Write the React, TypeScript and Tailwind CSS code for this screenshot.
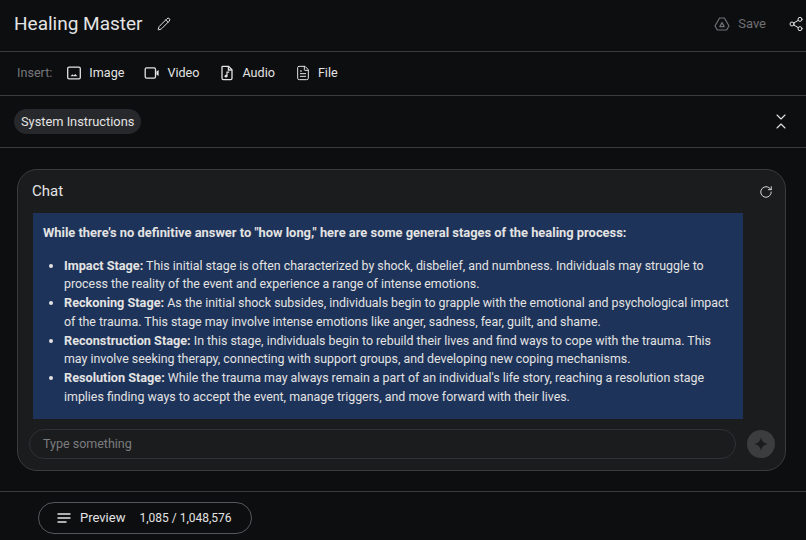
import React from "react";
import { ChevronDown, ChevronUp, FileText, Pencil, RotateCw, Share2 } from "lucide-react";

const stages = [
  {
    title: "Impact Stage:",
    text: " This initial stage is often characterized by shock, disbelief, and numbness. Individuals may struggle to process the reality of the event and experience a range of intense emotions.",
  },
  {
    title: "Reckoning Stage:",
    text: " As the initial shock subsides, individuals begin to grapple with the emotional and psychological impact of the trauma. This stage may involve intense emotions like anger, sadness, fear, guilt, and shame.",
  },
  {
    title: "Reconstruction Stage:",
    text: " In this stage, individuals begin to rebuild their lives and find ways to cope with the trauma. This may involve seeking therapy, connecting with support groups, and developing new coping mechanisms.",
  },
  {
    title: "Resolution Stage:",
    text: " While the trauma may always remain a part of an individual's life story, reaching a resolution stage implies finding ways to accept the event, manage triggers, and move forward with their lives.",
  },
];

function ImageIcon() {
  return (
    <svg width="16" height="16" viewBox="0 0 16 16" fill="none" stroke="currentColor" strokeWidth="1.3">
      <rect x="1.7" y="2.2" width="12.6" height="11.6" rx="1.4" />
      <path d="M4.5 11.2L6.3 9.2L7.7 10.6L9.2 9L11.5 11.2Z" fill="currentColor" stroke="none" />
    </svg>
  );
}

function VideoIcon() {
  return (
    <svg width="16" height="16" viewBox="0 0 16 16" fill="none" stroke="currentColor" strokeWidth="1.3">
      <rect x="1.2" y="2.8" width="10.3" height="10.4" rx="1.4" />
      <path d="M12.4 6.6L14.6 4.9V11.1L12.4 9.4Z" fill="currentColor" stroke="none" />
    </svg>
  );
}

function AudioIcon() {
  return (
    <svg width="16" height="16" viewBox="0 0 16 16" fill="none" stroke="currentColor" strokeWidth="1.3">
      <path d="M3.4 1.4H9.6L13 4.8V13.2C13 14 12.4 14.6 11.6 14.6H4.4C3.6 14.6 3 14 3 13.2V2.4C3 1.9 3.1 1.4 3.4 1.4Z" />
      <path d="M9.4 1.6V5H12.8" />
      <circle cx="7" cy="11.2" r="1.4" fill="currentColor" stroke="none" />
      <path d="M8 11V7.2H10.2" strokeWidth="1.2" />
    </svg>
  );
}

function DriveIcon() {
  return (
    <svg width="16" height="16" viewBox="0 0 16 16" fill="none" stroke="currentColor" strokeWidth="1.2" strokeLinejoin="round">
      <path d="M5.6 2H10.4L15 10L12.6 14H3.4L1 10Z" />
      <path d="M8 6.6L10.2 10.6H5.8Z" />
    </svg>
  );
}

const inserts = [
  { label: "Image", icon: <ImageIcon /> },
  { label: "Video", icon: <VideoIcon /> },
  { label: "Audio", icon: <AudioIcon /> },
  { label: "File", icon: <FileText size={16} strokeWidth={1.5} /> },
];

export default function App() {
  return (
    <div className="flex h-[540px] w-[806px] flex-col overflow-hidden bg-[#0d0e10] font-['Roboto',sans-serif] text-[#e3e3e3]">
      <header className="flex h-[52px] shrink-0 items-center justify-between border-b border-[#3a3b3d] pb-[3px] pl-[14px] pr-[2px]">
        <div className="flex items-center gap-[14px]">
          <h1 className="text-[19px]">Healing Master</h1>
          <Pencil size={14} strokeWidth={1.7} />
        </div>
        <div className="flex items-center">
          <span className="text-[#6f7073]">
            <DriveIcon />
          </span>
          <span className="ml-[8px] text-[13px] text-[#6f7073]">Save</span>
          <Share2 size={16} strokeWidth={1.5} className="ml-[22px]" />
        </div>
      </header>

      <div className="flex h-[44px] shrink-0 items-center border-b border-[#3a3b3d] pl-[17px] text-[12.6px]">
        <span className="mr-[14px] text-[#77787b]">Insert:</span>
        <div className="flex items-center gap-[20px]">
          {inserts.map((item) => (
            <div key={item.label} className="flex items-center gap-[7px]">
              {item.icon}
              <span>{item.label}</span>
            </div>
          ))}
        </div>
      </div>

      <div className="flex h-[52px] shrink-0 items-center justify-between border-b border-[#3a3b3d] pl-[14px] pr-[17px]">
        <span className="rounded-full bg-[#27282b] px-[7px] py-[4px] text-[12.8px] leading-[17px]">System Instructions</span>
        <div className="flex flex-col items-center">
          <ChevronDown size={16} strokeWidth={1.6} className="-mb-[7px]" />
          <ChevronUp size={16} strokeWidth={1.6} />
        </div>
      </div>

      <main className="flex flex-1 flex-col pb-[20px] pl-[17px] pr-[20px] pt-[21px]">
        <section className="flex h-[302px] flex-col rounded-[20px] border border-[#3a3b3d] bg-[#1b1c1e]">
          <div className="flex h-[43px] shrink-0 items-center justify-between pl-[14px] pr-[12px]">
            <h2 className="text-[15px] text-[#e3e3e3]">Chat</h2>
            <RotateCw size={14} strokeWidth={1.6} />
          </div>
          <div className="ml-[15px] h-[206px] w-[710px] bg-[#1e3359] px-[10px] pt-[11px] text-[12.4px] leading-[18.7px] text-[#e3e3e3]">
            <p className="text-[12.9px] font-bold">While there's no definitive answer to "how long," here are some general stages of the healing process:</p>
            <ul className="mt-[14px] list-disc pl-[21px]">
              {stages.map((stage) => (
                <li key={stage.title}>
                  <strong className="text-[12.7px]">{stage.title}</strong>
                  {stage.text}
                </li>
              ))}
            </ul>
          </div>
          <div className="mt-[10px] flex items-center pl-[11px] pr-[10px]">
            <div className="flex h-[30px] flex-1 items-center rounded-full border border-[#303134] pl-[13px] text-[12.5px] text-[#7b7c7f]">Type something</div>
            <div className="ml-[11px] flex h-[28px] w-[28px] items-center justify-center rounded-full bg-[#3c3d3f]">
              <svg width="14" height="14" viewBox="0 0 14 14" fill="#1b1c1e">
                <path d="M7 0C7.5 4 10 6.5 14 7C10 7.5 7.5 10 7 14C6.5 10 4 7.5 0 7C4 6.5 6.5 4 7 0Z" />
              </svg>
            </div>
          </div>
        </section>
      </main>

      <footer className="flex h-[49px] shrink-0 items-center border-t border-[#3a3b3d] pl-[38px] pt-[3px]">
        <div className="flex h-[32px] w-[214px] items-center rounded-full border border-[#56575a] pl-[17px]">
          <svg width="16" height="16" viewBox="0 0 16 16" fill="none" stroke="currentColor" strokeWidth="1.3">
            <path d="M1.5 4H14.5M1.5 8H14.5M1.5 12H10.5" />
          </svg>
          <span className="ml-[8px] text-[13px]">Preview</span>
          <span className="ml-[14px] text-[12px]">1,085 / 1,048,576</span>
        </div>
      </footer>
    </div>
  );
}
